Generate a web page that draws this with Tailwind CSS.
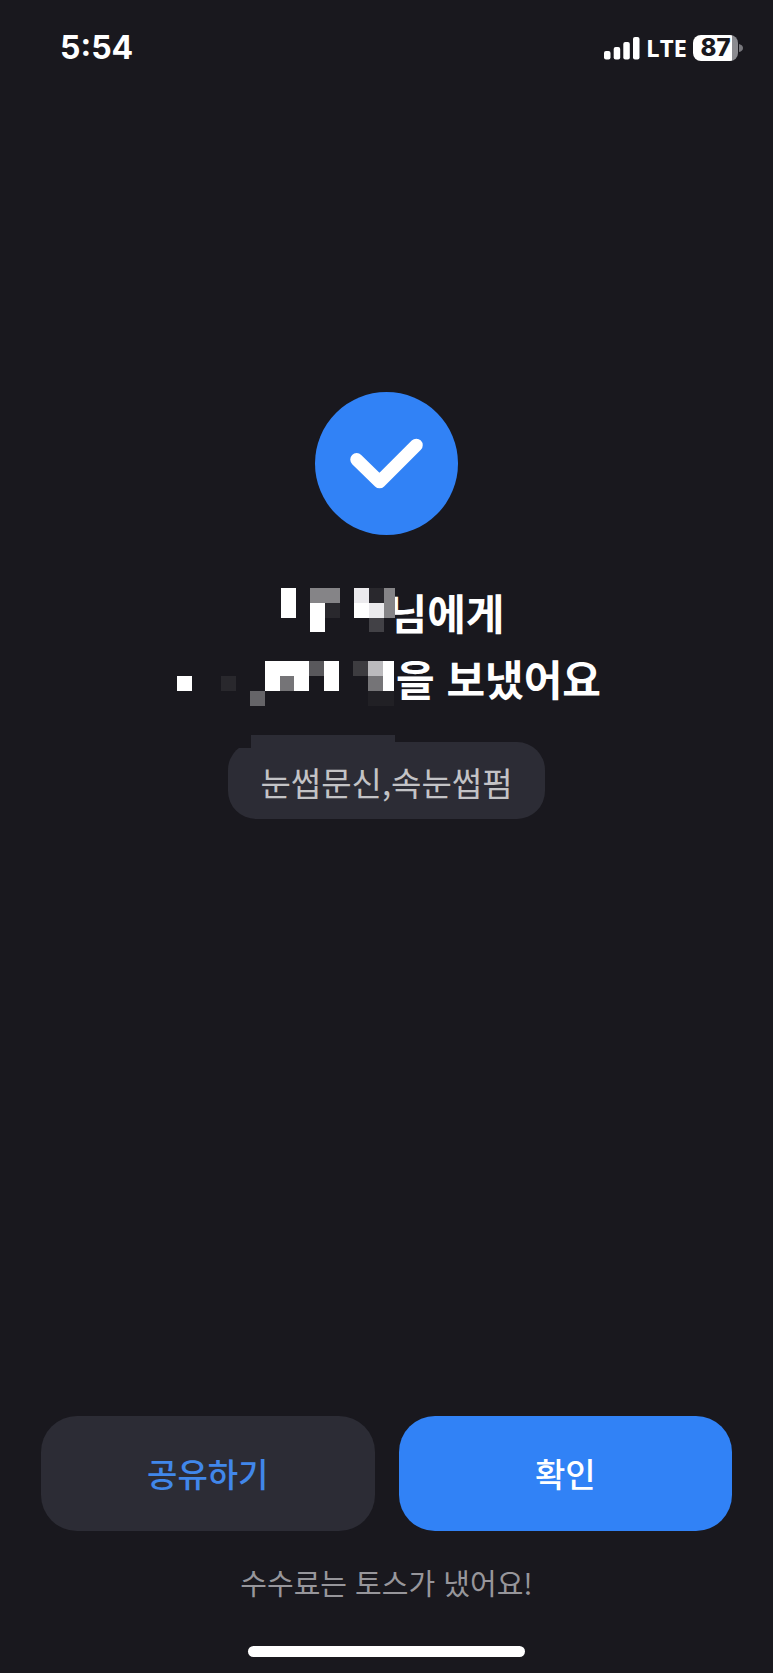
<!DOCTYPE html>
<html lang="ko">
<head>
<meta charset="utf-8">
<meta name="viewport" content="width=device-width, initial-scale=1">
<title>송금 완료</title>
<script src="https://cdn.jsdelivr.net/npm/@tailwindcss/browser@4"></script>
</head>
<body class="flex min-h-screen flex-col bg-[#19181e] font-['Noto_Sans_CJK_KR',sans-serif] text-white">
  <header class="flex h-24 items-center justify-between pl-[60px] pr-[30px]">
    <time class="font-[Inter,sans-serif] text-[32px] leading-10 font-bold">5:54</time>
    <div class="flex items-center gap-1.5 font-['Open_Sans',sans-serif]">
      <svg class="h-6 w-9" viewBox="0 0 36 24" fill="#fff" aria-hidden="true">
        <rect x="0" y="15" width="6.500" height="8.500" rx="2"/>
        <rect x="9.700" y="11" width="6.500" height="12.500" rx="2"/>
        <rect x="19.300" y="6" width="6.500" height="17.500" rx="2"/>
        <rect x="29" y="1" width="6.500" height="22.500" rx="2"/>
      </svg>
      <span class="text-2xl font-bold">LTE</span>
      <div class="flex items-center gap-px">
        <span class="flex h-[26px] w-[45px] items-center justify-center rounded-lg bg-linear-to-r from-white from-87% to-[#8b8b90] to-87% font-[Inter,sans-serif] text-2xl font-extrabold text-[#19181e]">87</span>
        <svg class="h-2 w-1" viewBox="0 0 4 8" fill="#77777c" aria-hidden="true"><path d="M0 0Q4 1 4 4T0 8Z"/></svg>
      </div>
    </div>
  </header>

  <main class="flex flex-1 flex-col items-center pt-74">
    <svg class="size-[143px]" viewBox="0 0 144 144" fill="none" aria-hidden="true">
      <circle cx="72" cy="72" r="72" fill="#3182f6"/>
      <path d="M42 68L65 90.500L102 53.500" stroke="#fff" stroke-width="13" stroke-linecap="round" stroke-linejoin="round"/>
    </svg>

    <h1 class="mt-11 flex flex-col items-center text-[42px] leading-[66px] font-bold">
      <span class="flex items-center">
        <svg class="relative h-[66px] w-[126px]" viewBox="268 579 126 66" shape-rendering="crispEdges" aria-hidden="true">
          <path fill="#fff" d="M280 588h15v30h-15zM309 603h15v29h-15zM353 603h15v15h-15z"/>
          <path fill="#858487" d="M309 588h30v15h-30zM383 588h11v30h-11z"/>
          <path fill="#ebeaed" d="M353 588h15v15h-15zM368 603h15v15h-15z"/>
          <path fill="#29282d" d="M324 603h15v15h-15zM368 588h15v15h-15z"/>
          <path fill="#424146" d="M368 618h15v14h-15z"/>
        </svg>
        <span class="-ml-1.5">님에게</span>
      </span>
      <span class="flex items-center">
        <svg class="h-[66px] w-[222px]" viewBox="172 645 222 66" shape-rendering="crispEdges" aria-hidden="true">
          <path fill="#fff" d="M177 676h15v15h-15zM265 661h44v30h-44zM324 661h15v30h-15zM383 661h11v30h-11z"/>
          <path fill="#29282d" d="M221 676h15v15h-15z"/>
          <path fill="#656468" d="M250 691h15v15h-15z"/>
          <path fill="#757477" d="M280 676h14v15h-14zM368 676h15v15h-15z"/>
          <path fill="#59585c" d="M309 661h15v15h-15z"/>
          <path fill="#3d3c40" d="M353 661h15v15h-15z"/>
          <path fill="#bbbabd" d="M368 661h15v15h-15z"/>
          <path fill="#212025" d="M368 691h26v15h-26z"/>
        </svg>
        <span class="ml-0.5">을 보냈어요</span>
      </span>
    </h1>

    <div class="relative mt-[31px] rounded-[28px] bg-[#2c2c35] px-8 pt-4 pb-3 text-[33px] leading-[49px] text-[#c3c3c6]">
      <svg class="absolute -top-[7px] left-0 h-[13px] w-[167px]" viewBox="0 0 167 13" shape-rendering="crispEdges" aria-hidden="true">
        <path fill="#19181e" d="M0 7h23v6H0z"/>
        <path fill="#2c2c35" d="M23 0h144v13H23z"/>
      </svg>
      눈썹문신,속눈썹펌
    </div>
  </main>

  <footer class="flex flex-col items-center">
    <div class="grid w-full grid-cols-2 gap-6 px-[41px] text-[33px] leading-[49px] font-medium">
      <button type="button" class="rounded-[36px] bg-[#2c2c35] py-[33px] text-[#4187ea]">공유하기</button>
      <button type="button" class="rounded-[36px] bg-[#3182f6] py-[33px]">확인</button>
    </div>
    <p class="mt-[31px] text-[29px] leading-10 text-[#97969b]">수수료는 토스가 냈어요!</p>
    <div class="mt-11 mb-4 h-[11px] w-[277px] rounded-full bg-white"></div>
  </footer>
</body>
</html>
